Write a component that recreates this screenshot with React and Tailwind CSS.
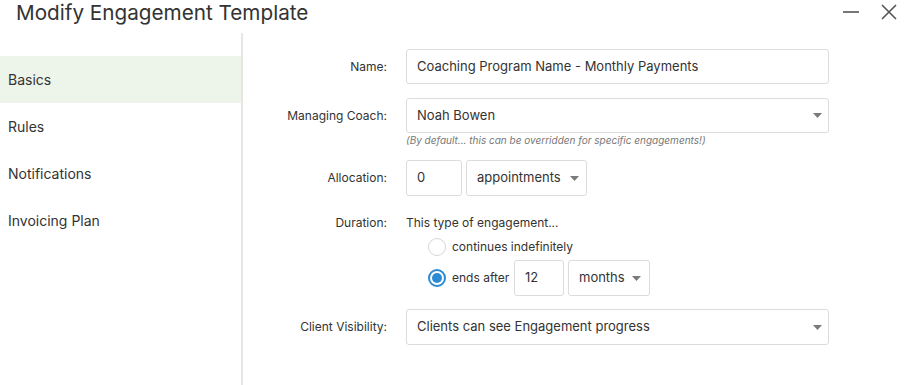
import React from "react";

function Caret() {
  return (
    <svg width="9" height="5" viewBox="0 0 9 5" className="shrink-0">
      <path d="M0 0h9L4.5 5z" fill="#7a7a7a" />
    </svg>
  );
}

function Label({ children }) {
  return <div className="w-[163px] shrink-0 text-right text-[12px] text-[#333] pr-[19px]">{children}</div>;
}

export default function App() {
  const font = { fontFamily: "Inter, 'Liberation Sans', sans-serif" };
  return (
    <div className="w-[906px] h-[385px] bg-white overflow-hidden flex flex-col text-[#333]" style={font}>
      <div className="h-[33px] flex items-center justify-between pl-[16px] pr-[8px] shrink-0">
        <div className="text-[20.7px] text-[#333] leading-none -mt-[6px]">Modify Engagement Template</div>
        <div className="flex items-center gap-[20px] -mt-[10px]">
          <svg width="18" height="18" viewBox="0 0 18 18">
            <path d="M1 9h16" stroke="#555" strokeWidth="1.6" />
          </svg>
          <svg width="18" height="18" viewBox="0 0 18 18">
            <path d="M2 2l14 14M16 2L2 16" stroke="#555" strokeWidth="1.6" />
          </svg>
        </div>
      </div>
      <div className="flex flex-1">
        <div className="w-[243px] shrink-0 border-r-2 border-[#e6e6e6] pt-[23px]">
          {["Basics", "Rules", "Notifications", "Invoicing Plan"].map((t, i) => (
            <div
              key={t}
              className={`h-[47px] flex items-center pl-[8px] text-[14px] text-[#333] ${i === 0 ? "bg-[#edf4ea]" : ""}`}
            >
              {t}
            </div>
          ))}
        </div>
        <div className="flex-1 pt-[16px]">
          <div className="flex items-center">
            <Label>Name:</Label>
            <div className="w-[423px] h-[35px] border border-[#dcdcdc] rounded-[3px] flex items-center px-[10px] text-[13px] text-[#333]">
              Coaching Program Name - Monthly Payments
            </div>
          </div>
          <div className="flex items-center mt-[14px]">
            <Label>Managing Coach:</Label>
            <div className="w-[423px] h-[35px] border border-[#dcdcdc] rounded-[3px] flex items-center justify-between pl-[10px] pr-[6px] text-[13px] text-[#333]">
              <span>Noah Bowen</span>
              <Caret />
            </div>
          </div>
          <div className="pl-[163px] mt-[1px] text-[10px] italic text-[#777] leading-[13px]">
            (By default... this can be overridden for specific engagements!)
          </div>
          <div className="flex items-center mt-[13px]">
            <Label>Allocation:</Label>
            <div className="w-[56px] h-[36px] border border-[#dcdcdc] rounded-[3px] flex items-center px-[10px] text-[13px]">0</div>
            <div className="w-[121px] h-[36px] ml-[4px] border border-[#dcdcdc] rounded-[3px] flex items-center justify-between pl-[10px] pr-[7px] text-[13px]">
              <span>appointments</span>
              <Caret />
            </div>
          </div>
          <div className="flex items-center mt-[18px]">
            <Label>Duration:</Label>
            <div className="text-[12px] text-[#333]">This type of engagement...</div>
          </div>
          <div className="flex items-center mt-[6px] pl-[185px]">
            <div className="w-[18px] h-[18px] rounded-full border border-[#d6d6d6] bg-white" />
            <span className="ml-[6px] text-[12px]">continues indefinitely</span>
          </div>
          <div className="flex items-center mt-[4px] pl-[185px]">
            <div className="w-[18px] h-[18px] rounded-full border-2 border-[#2a8ad4] bg-white flex items-center justify-center">
              <div className="w-[10px] h-[10px] rounded-full bg-[#2a8ad4]" />
            </div>
            <span className="ml-[6px] w-[62px] text-[12px]">ends after</span>
            <div className="w-[50px] h-[36px] border border-[#dcdcdc] rounded-[3px] flex items-center px-[10px] text-[13px]">12</div>
            <div className="w-[82px] h-[36px] ml-[4px] border border-[#dcdcdc] rounded-[3px] flex items-center justify-between pl-[10px] pr-[8px] text-[13px]">
              <span>months</span>
              <Caret />
            </div>
          </div>
          <div className="flex items-center mt-[13px]">
            <Label>Client Visibility:</Label>
            <div className="w-[423px] h-[36px] border border-[#dcdcdc] rounded-[3px] flex items-center justify-between pl-[10px] pr-[6px] text-[13px] text-[#333]">
              <span>Clients can see Engagement progress</span>
              <Caret />
            </div>
          </div>
        </div>
      </div>
    </div>
  );
}
